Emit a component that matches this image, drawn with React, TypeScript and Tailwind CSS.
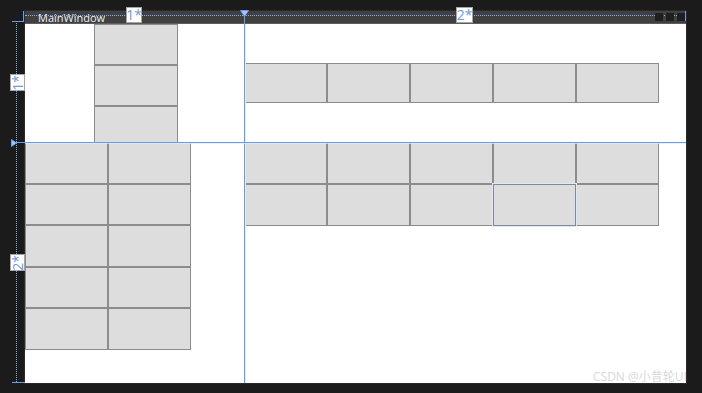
import React from "react";

function Btn({ className = "", hover = false }: { className?: string; hover?: boolean }) {
  return (
    <div
      className={
        "box-border bg-[#dddddd] border " +
        (hover
          ? "border-[#7f8799] shadow-[0_0_0_1px_#dfe8f8] relative z-10 "
          : "border-[#8c8c8c] ") +
        className
      }
    />
  );
}

export default function App() {
  const five = [0, 1, 2, 3, 4];
  return (
    <div
      className="relative w-[702px] h-[393px] bg-[#1b1b1b] overflow-hidden"
      style={{ fontFamily: '"Open Sans", "Noto Sans", "Noto Sans CJK SC", sans-serif' }}
    >
      <div className="pt-[10px] pl-[24px]">
        <div className="w-[663px] flex flex-col border border-[#2a2a2a] bg-[#2a2a2a]">
          {/* title bar */}
          <div className="h-[13px] bg-[#404040] border-b border-[#5c5c5c] flex items-center pl-[13px]">
            <span className="text-[11px] leading-none text-[#eef2f8] mt-[1px]">MainWindow</span>
          </div>
          {/* content */}
          <div className="h-[359px] w-[661px] bg-white grid grid-cols-[219px_442px] grid-rows-[118px_241px] overflow-hidden">
            <div className="flex flex-col items-center overflow-hidden pl-[2px]">
              <Btn className="w-[84px] h-[41px] shrink-0" />
              <Btn className="w-[84px] h-[41px] shrink-0" />
              <Btn className="w-[84px] h-[41px] shrink-0" />
            </div>
            <div className="flex items-center">
              {five.map((i) => (
                <Btn key={i} className="w-[83px] h-[40px]" />
              ))}
            </div>
            <div>
              <div className="grid grid-cols-2 grid-rows-5 w-[166px] h-[208px]">
                {Array.from({ length: 10 }).map((_, i) => (
                  <Btn key={i} />
                ))}
              </div>
            </div>
            <div>
              <div className="grid grid-cols-5 grid-rows-2 w-[415px] h-[84px]">
                {Array.from({ length: 10 }).map((_, i) => (
                  <Btn key={i} hover={i === 8} />
                ))}
              </div>
            </div>
          </div>
        </div>
      </div>

      {/* designer adorners */}
      <div className="absolute left-[25px] top-[15px] w-[660px] border-t border-dotted border-[#86aaf0]" />
      <div className="absolute left-[16px] top-[21px] h-[361px] border-l border-dotted border-[#86aaf0]" />
      <div className="absolute left-[12px] top-[21px] w-[12px] h-px bg-[#6d9be6]" />
      <div className="absolute left-[23px] top-[11px] w-px h-[10px] bg-[#6d9be6]" />
      <div className="absolute left-[12px] top-[382px] w-[13px] h-px bg-[#6d9be6]" />
      <div className="absolute left-[685px] top-[11px] w-px h-[10px] bg-[#6d9be6]" />

      {/* window buttons */}
      <div className="absolute left-[655px] top-[13px] flex gap-[3px]">
        <div className="w-[8px] h-[8px] bg-[#1f1f1f]" />
        <div className="w-[8px] h-[8px] bg-[#1f1f1f]" />
        <div className="w-[8px] h-[8px] bg-[#1f1f1f]" />
      </div>

      {/* column divider */}
      <div className="absolute left-[244px] top-[11px] w-px h-[372px] bg-[#6a9be8]" />
      <div className="absolute left-[245px] top-[24px] w-px h-[359px] bg-[#e2ebfa]" />
      <svg className="absolute left-[240px] top-[10px]" width="9" height="7" viewBox="0 0 9 7">
        <polygon points="0.5,0.5 8.5,0.5 4.5,6.5" fill="#a9c4f1" stroke="#6a9be8" strokeWidth="1" />
      </svg>

      {/* row divider */}
      <div className="absolute left-[16px] top-[142px] w-[670px] h-px bg-[#6a9be8]" />
      <div className="absolute left-[25px] top-[143px] w-[661px] h-px bg-[#e2ebfa] opacity-70" />
      <svg className="absolute left-[11px] top-[139px]" width="6" height="8" viewBox="0 0 6 8">
        <polygon points="0.5,0.5 5.5,4 0.5,7.5" fill="#a9c4f1" stroke="#6a9be8" strokeWidth="1" />
      </svg>

      {/* labels */}
      <div className="absolute left-[126px] top-[7px] w-[16px] h-[16px] bg-white border border-[#a5a5a5] flex items-center justify-center">
        <span className="text-[14px] leading-none text-[#6f97db]">1*</span>
      </div>
      <div className="absolute left-[456px] top-[7px] w-[17px] h-[16px] bg-white border border-[#a5a5a5] flex items-center justify-center">
        <span className="text-[14px] leading-none text-[#6f97db]">2*</span>
      </div>
      <div className="absolute left-[10px] top-[74px] w-[15px] h-[17px] bg-white border border-[#a5a5a5] flex items-center justify-center">
        <span className="text-[14px] leading-none text-[#6f97db] -rotate-90 inline-block">1*</span>
      </div>
      <div className="absolute left-[10px] top-[254px] w-[15px] h-[17px] bg-white border border-[#a5a5a5] flex items-center justify-center">
        <span className="text-[14px] leading-none text-[#6f97db] -rotate-90 inline-block">2*</span>
      </div>

      {/* watermark */}
      <div className="absolute left-[593px] top-[371px] text-[12px] leading-none text-[#d0d0d0] opacity-80 whitespace-nowrap">
        CSDN @小昔轮UI
      </div>
    </div>
  );
}
